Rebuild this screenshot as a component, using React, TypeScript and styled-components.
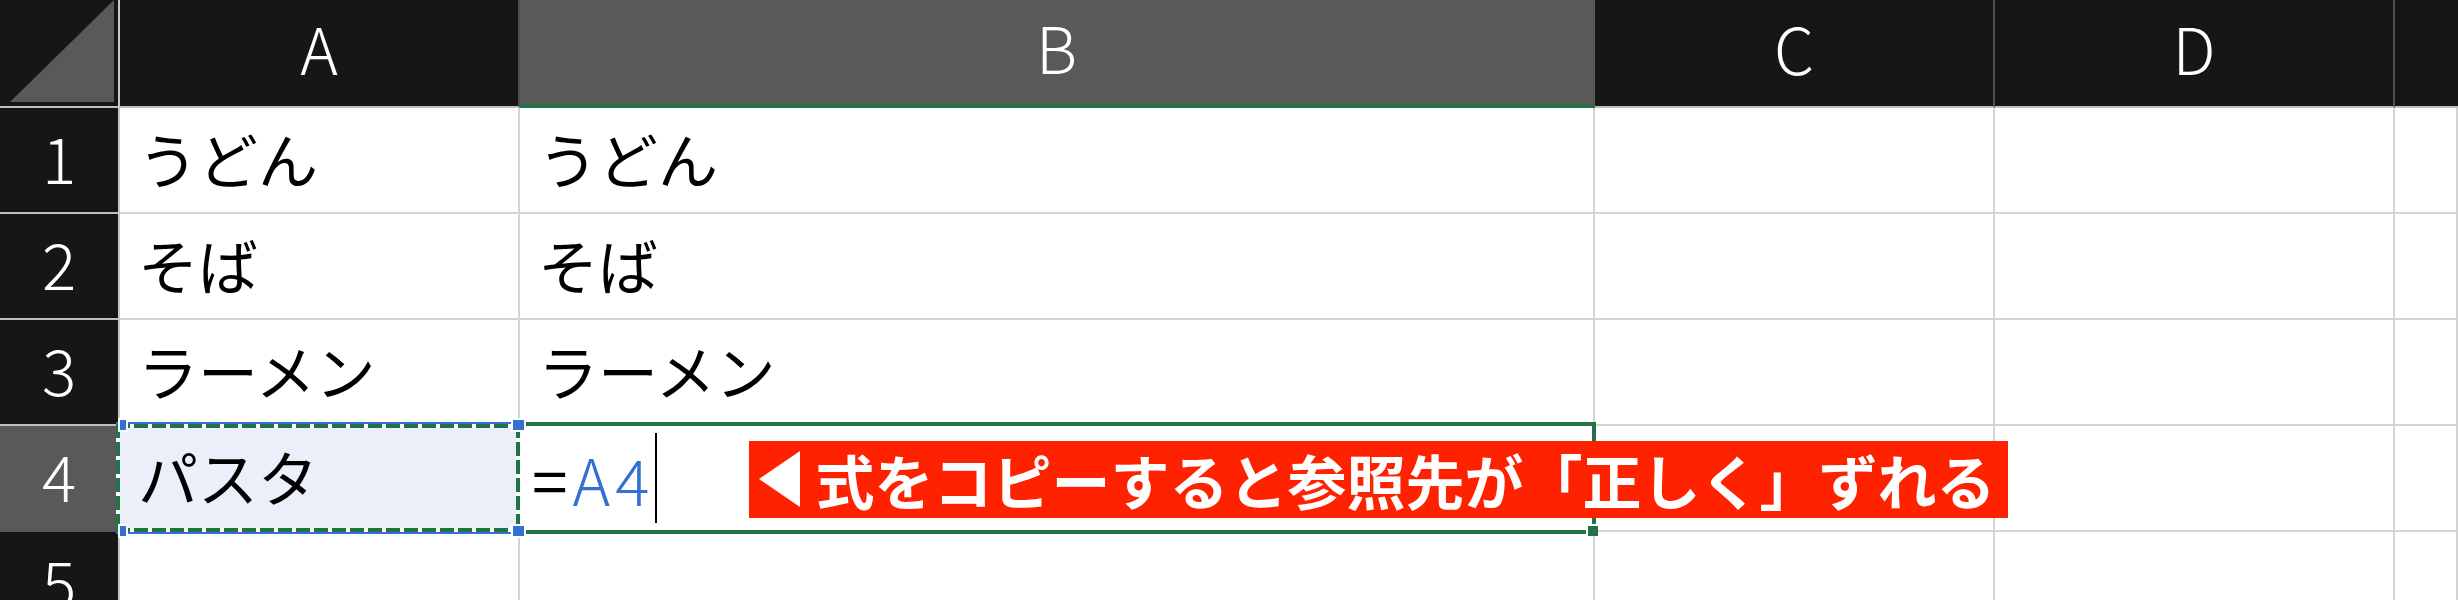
import React from 'react'
import styled, { createGlobalStyle } from 'styled-components'

const GlobalStyle = createGlobalStyle`
  html, body {
    margin: 0;
    padding: 0;
    background: #ffffff;
  }
  body {
    overflow: hidden;
  }
`

const GREEN = '#217346'
const BLUE = '#3370d1'
const GRID = '#d4d4d4'

const Sheet = styled.div`
  display: grid;
  grid-template-columns: 120px 400px 1075px 400px 400px 1fr;
  grid-template-rows: 108px repeat(5, 106px);
  width: 2458px;
  height: 600px;
  overflow: hidden;
  font-family: 'Noto Sans CJK JP', 'Noto Sans', sans-serif;
`

const Corner = styled.div`
  box-sizing: border-box;
  background: #161616;
  border-right: 2px solid #c8c8c8;
  border-bottom: 2px solid #c0c0c0;
`

const CornerTriangle = styled.div`
  width: 100%;
  height: 100%;
  background: #595959;
  clip-path: polygon(10px 102px, 114px 102px, 114px 0);
`

const ColHeader = styled.div<{ $selected?: boolean; $last?: boolean }>`
  box-sizing: border-box;
  display: flex;
  align-items: center;
  justify-content: center;
  padding-bottom: 12px;
  background: ${(p) => (p.$selected ? '#595959' : '#161616')};
  border-right: ${(p) => (p.$last ? 'none' : `2px solid ${p.$selected ? '#595959' : '#505050'}`)};
  border-bottom: ${(p) => (p.$selected ? `4px solid ${GREEN}` : '2px solid #c0c0c0')};
  color: #ffffff;
  font-size: 64px;
  font-weight: 300;
  line-height: 1;
`

const RowHeader = styled.div<{ $selected?: boolean }>`
  box-sizing: border-box;
  display: flex;
  align-items: center;
  justify-content: center;
  padding-bottom: 8px;
  background: ${(p) => (p.$selected ? '#595959' : '#161616')};
  border-right: 2px solid #c8c8c8;
  border-bottom: 2px solid ${(p) => (p.$selected ? '#595959' : '#bfbfbf')};
  color: #ffffff;
  font-size: 64px;
  font-weight: 300;
  line-height: 1;
`

const Cell = styled.div<{ $highlight?: boolean }>`
  box-sizing: border-box;
  position: relative;
  display: flex;
  align-items: center;
  padding: 0 0 4px 18px;
  background: ${(p) => (p.$highlight ? '#eaeffa' : '#ffffff')};
  border-right: 2px solid ${GRID};
  border-bottom: 2px solid ${GRID};
  color: #000000;
  font-size: 60px;
  font-weight: 400;
  line-height: 1;
  white-space: nowrap;
`

const EditCell = styled(Cell)`
  padding: 0 0 0 12px;
`

const CopyMarquee = styled.div`
  position: absolute;
  top: -4px;
  bottom: -4px;
  left: -4px;
  right: -2px;
  z-index: 3;
  border-top: 2px solid ${BLUE};
  border-bottom: 2px solid ${BLUE};
  background:
    repeating-linear-gradient(90deg, ${GREEN} 0 14px, #fff 14px 18px) top left / 100% 4px no-repeat,
    repeating-linear-gradient(90deg, ${GREEN} 0 14px, #fff 14px 18px) bottom left / 100% 4px no-repeat,
    repeating-linear-gradient(180deg, ${GREEN} 0 14px, #fff 14px 18px) top left / 4px 100% no-repeat,
    repeating-linear-gradient(180deg, ${GREEN} 0 14px, #fff 14px 18px) top right / 4px 100% no-repeat;
`

const RefHandle = styled.span<{ $side: 'left' | 'right'; $edge: 'top' | 'bottom' }>`
  position: absolute;
  ${(p) => (p.$side === 'left' ? 'left: 4px; width: 6px;' : 'right: -4px; width: 11px;')}
  ${(p) => (p.$edge === 'top' ? 'top: -4px;' : 'bottom: -4px;')}
  height: 10px;
  background: ${BLUE};
  box-shadow: 0 0 0 2px #ffffff;
`

const EditBorder = styled.div`
  position: absolute;
  top: -4px;
  bottom: -4px;
  left: 0;
  right: -3px;
  z-index: 2;
  border: 4px solid ${GREEN};
  border-left: none;
`

const FillHandle = styled.span`
  position: absolute;
  right: -6px;
  bottom: -6px;
  width: 10px;
  height: 10px;
  background: ${GREEN};
  box-shadow: -2px -2px 0 0 #ffffff;
`

const Formula = styled.span`
  font-size: 64px;
  font-weight: 400;
  letter-spacing: 5px;
  color: #000000;
`

const RefText = styled.span`
  color: ${BLUE};
  font-weight: 300;
`

const Caret = styled.span`
  flex-shrink: 0;
  width: 2px;
  height: 90px;
  margin-left: 1px;
  background: #000000;
`

const Callout = styled.div`
  position: relative;
  z-index: 4;
  flex-shrink: 0;
  display: flex;
  align-items: center;
  gap: 15px;
  height: 77px;
  margin: 2px 0 0 92px;
  padding: 0 13px 0 10px;
  background: #ff2200;
  color: #ffffff;
  font-size: 59px;
  font-weight: 700;
  line-height: 1;
  white-space: nowrap;
`

const PointerTriangle = styled.span`
  flex-shrink: 0;
  width: 0;
  height: 0;
  border-top: 28px solid transparent;
  border-bottom: 28px solid transparent;
  border-right: 41px solid #ffffff;
`

const columns = ['A', 'B', 'C', 'D', 'E']
const foods = ['うどん', 'そば', 'ラーメン']

export default function App() {
  return (
    <>
      <GlobalStyle />
      <Sheet>
        <Corner>
          <CornerTriangle />
        </Corner>
        {columns.map((c, i) => (
          <ColHeader key={c} $selected={c === 'B'} $last={i === columns.length - 1}>
            {c === 'E' ? '' : c}
          </ColHeader>
        ))}

        {foods.map((food, r) => (
          <React.Fragment key={food}>
            <RowHeader>{r + 1}</RowHeader>
            <Cell>{food}</Cell>
            <Cell>{food}</Cell>
            <Cell />
            <Cell />
            <Cell />
          </React.Fragment>
        ))}

        <RowHeader $selected>4</RowHeader>
        <Cell $highlight>
          パスタ
          <CopyMarquee>
            <RefHandle $side="left" $edge="top" />
            <RefHandle $side="right" $edge="top" />
            <RefHandle $side="left" $edge="bottom" />
            <RefHandle $side="right" $edge="bottom" />
          </CopyMarquee>
        </Cell>
        <EditCell>
          <Formula>
            =<RefText>A4</RefText>
          </Formula>
          <Caret />
          <Callout>
            <PointerTriangle />
            式をコピーすると参照先が「正しく」ずれる
          </Callout>
          <EditBorder>
            <FillHandle />
          </EditBorder>
        </EditCell>
        <Cell />
        <Cell />
        <Cell />

        <RowHeader>5</RowHeader>
        <Cell />
        <Cell />
        <Cell />
        <Cell />
        <Cell />
      </Sheet>
    </>
  )
}
